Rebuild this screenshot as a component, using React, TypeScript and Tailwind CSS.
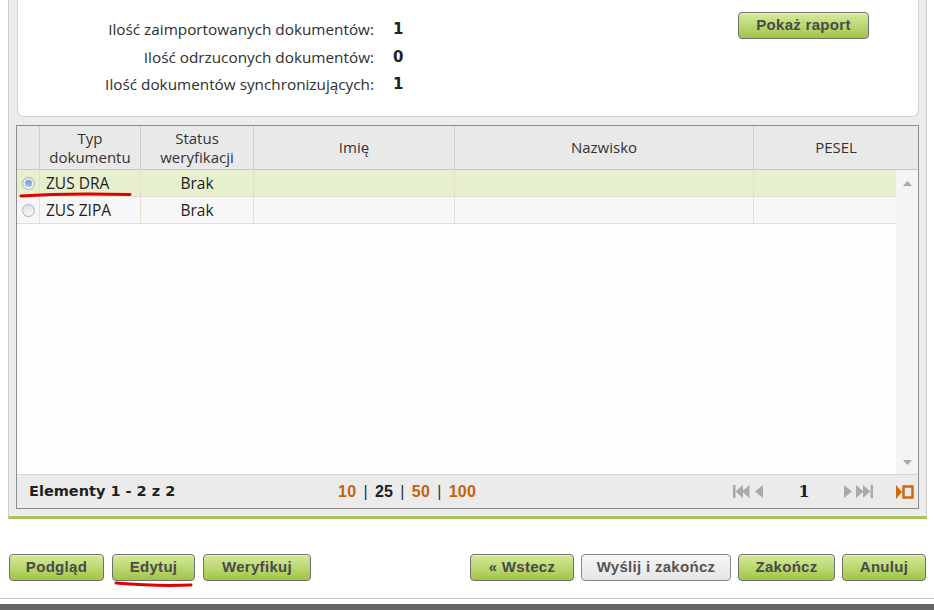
import React from "react";

const greenBtn =
  "h-[27px] rounded-[4px] border border-[#6f6f6f] bg-gradient-to-b from-[#d6ea9c] via-[#bcd871] to-[#9fc545] text-[15px] tracking-[0.3px] font-bold text-[#4a4a4a] font-['Liberation_Sans',Arial,sans-serif] flex items-center justify-center shadow-[inset_0_1px_0_rgba(255,255,255,0.5)]";

function Radio({ selected }: { selected?: boolean }) {
  return (
    <div className="w-[13px] h-[13px] rounded-full border border-[#adb2ba] bg-gradient-to-b from-[#dfe2e7] to-[#f8f8f8] flex items-center justify-center">
      {selected && <div className="w-[7px] h-[7px] rounded-full bg-gradient-to-b from-[#6f9ccc] to-[#a9c6e4]" />}
    </div>
  );
}

function Row({ typ, selected }: { typ: string; selected?: boolean }) {
  return (
    <div
      className={`grid grid-cols-[23px_101px_113px_201px_299px_1fr] h-[27px] border-b border-[#e6dfcf] text-[15.5px] text-[#1e1e1e] ${
        selected ? "bg-[#e6f0cf]" : "bg-[#f7f7f7]"
      }`}
    >
      <div className="flex items-center justify-center border-r border-[#e6dfcf]">
        <Radio selected={selected} />
      </div>
      <div className="flex items-center pl-[6px] pt-px border-r border-[#e6dfcf]">{typ}</div>
      <div className="flex items-center justify-center pt-px border-r border-[#e6dfcf]">Brak</div>
      <div className="border-r border-[#e6dfcf]" />
      <div className="border-r border-[#e6dfcf]" />
      <div />
    </div>
  );
}

export default function App() {
  return (
    <div className="relative w-[934px] h-[610px] overflow-hidden bg-white font-['Open_Sans','Noto_Sans',sans-serif] text-[#2b2b2b]">
      <div className="ml-[8px] w-[919px] border-x border-[#cdcdcd] border-b-[3px] border-b-[#a8c55a] bg-[#ececec] px-[7px] pb-[7px]">
        {/* top panel */}
        <div className="ml-px w-[902px] h-[117px] bg-white border border-t-0 border-[#d4d4d4] rounded-b-[7px] flex items-start">
          <div className="grid grid-cols-[356px_auto] content-start gap-x-[19px] pt-[16px] text-[15.3px] leading-[27.5px] text-[#2e2e2e]">
            <div className="text-right">Ilość zaimportowanych dokumentów:</div>
            <div className="font-bold font-['DejaVu_Sans',sans-serif] text-[#222] text-[15px]">1</div>
            <div className="text-right">Ilość odrzuconych dokumentów:</div>
            <div className="font-bold font-['DejaVu_Sans',sans-serif] text-[#222] text-[15px]">0</div>
            <div className="text-right">Ilość dokumentów synchronizujących:</div>
            <div className="font-bold font-['DejaVu_Sans',sans-serif] text-[#222] text-[15px]">1</div>
          </div>
          <div className="ml-auto mr-[49px] mt-[12px]">
            <button className={`${greenBtn} w-[131px]`}>Pokaż raport</button>
          </div>
        </div>

        {/* table */}
        <div className="mt-[8px] w-[903px] h-[384px] border border-[#8c8c8c] flex flex-col">
          <div className="grid grid-cols-[23px_101px_113px_201px_299px_1fr] h-[44px] bg-[#e9e9e9] border-b border-[#c9c9c9] text-[15px] leading-[19px] text-[#333]">
            <div className="border-r border-[#cfcfcf]" />
            <div className="border-r border-[#cfcfcf] flex flex-col items-center justify-center text-center">
              <span>Typ</span>
              <span>dokumentu</span>
            </div>
            <div className="border-r border-[#cfcfcf] flex flex-col items-center justify-center text-center">
              <span>Status</span>
              <span>weryfikacji</span>
            </div>
            <div className="border-r border-[#cfcfcf] flex items-center justify-center">Imię</div>
            <div className="border-r border-[#cfcfcf] flex items-center justify-center">Nazwisko</div>
            <div className="flex items-center justify-center">PESEL</div>
          </div>
          <div className="flex-1 flex bg-[#fdfdfd]">
            <div className="w-[879px]">
              <Row typ="ZUS DRA" selected />
              <Row typ="ZUS ZIPA" />
            </div>
            <div className="flex-1 bg-[#f4f4f4] flex flex-col items-center justify-between pt-[11px] pb-[9px]">
              <svg width="9" height="5" viewBox="0 0 9 5">
                <polygon points="0,5 4.5,0 9,5" fill="#a8a8a8" />
              </svg>
              <svg width="9" height="5" viewBox="0 0 9 5">
                <polygon points="0,0 9,0 4.5,5" fill="#a8a8a8" />
              </svg>
            </div>
          </div>
          <div className="h-[34px] bg-[#ebebeb] border-t border-[#d6d6d6] flex items-center font-bold">
            <div className="w-[321px] pl-[12px] text-[#1f1f1f] font-['DejaVu_Sans',sans-serif] text-[14.5px]">Elementy 1 - 2 z 2</div>
            <div className="flex items-center text-[16px] font-['Liberation_Sans',Arial,sans-serif] tracking-[0.3px]">
              <span className="text-[#c5620d]">10</span>
              <span className="mx-[7px] text-[#333] font-normal">|</span>
              <span className="text-[#1f1f1f]">25</span>
              <span className="mx-[7px] text-[#333] font-normal">|</span>
              <span className="text-[#c5620d]">50</span>
              <span className="mx-[7px] text-[#333] font-normal">|</span>
              <span className="text-[#c5620d]">100</span>
            </div>
            <div className="ml-auto mr-[4px] flex items-center">
              <svg width="20" height="13" viewBox="0 0 20 13">
                <rect x="0" y="0" width="2.5" height="13" fill="#a9a9a9" />
                <polygon points="2.5,6.5 10,0 10,13" fill="#a9a9a9" />
                <polygon points="9,6.5 16.5,0 16.5,13" fill="#a9a9a9" />
              </svg>
              <svg className="ml-[2px]" width="10" height="13" viewBox="0 0 10 13">
                <polygon points="0,6.5 8,0 8,13" fill="#a9a9a9" />
              </svg>
              <span className="w-[78px] text-center font-['DejaVu_Serif',serif] text-[16px] text-[#1a1a2e]">1</span>
              <svg width="10" height="13" viewBox="0 0 10 13">
                <polygon points="1,0 9,6.5 1,13" fill="#a9a9a9" />
              </svg>
              <svg className="ml-[2px]" width="20" height="13" viewBox="0 0 20 13">
                <polygon points="1,0 8.5,6.5 1,13" fill="#a9a9a9" />
                <polygon points="8,0 15.5,6.5 8,13" fill="#a9a9a9" />
                <rect x="15.5" y="0" width="2.5" height="13" fill="#a9a9a9" />
              </svg>
              <svg className="ml-[21px]" width="18" height="14" viewBox="0 0 18 14">
                <polygon points="0,0 6,7 0,14" fill="#cf6a12" />
                <rect x="7.5" y="1.5" width="9" height="11" fill="none" stroke="#cf6a12" strokeWidth="2.5" />
              </svg>
            </div>
          </div>
        </div>
      </div>

      {/* bottom buttons */}
      <div className="mt-[35px] flex pl-[9px] pr-[8px]">
        <button className={`${greenBtn} w-[95px]`}>Podgląd</button>
        <button className={`${greenBtn} w-[83px] ml-[8px]`}>Edytuj</button>
        <button className={`${greenBtn} w-[108px] ml-[8px]`}>Weryfikuj</button>
        <button className={`${greenBtn} w-[104px] ml-auto`}>« Wstecz</button>
        <button className="h-[27px] w-[150px] ml-[7px] rounded-[4px] border border-[#8a8a8a] bg-gradient-to-b from-[#f6f6f6] to-[#e6e6e6] text-[15px] tracking-[0.3px] font-bold text-[#555] font-['Liberation_Sans',Arial,sans-serif] flex items-center justify-center">
          Wyślij i zakończ
        </button>
        <button className={`${greenBtn} w-[97px] ml-[7px]`}>Zakończ</button>
        <button className={`${greenBtn} w-[84px] ml-[7px]`}>Anuluj</button>
      </div>
      <div className="mt-[17px] h-px bg-[#c2c2c2]" />
      <div className="mt-[5px] h-[10px] bg-[#666]" />

      {/* red annotations */}
      <svg className="absolute left-[19px] top-[191px]" width="114" height="8" viewBox="0 0 114 8">
        <path d="M2 5 C 30 3, 70 2.5, 111 3.5" stroke="#e00000" strokeWidth="3" fill="none" strokeLinecap="round" />
      </svg>
      <svg className="absolute left-[114px] top-[580px]" width="80" height="8" viewBox="0 0 80 8">
        <path d="M2 3 C 25 5, 55 6, 77 5" stroke="#e00000" strokeWidth="3" fill="none" strokeLinecap="round" />
      </svg>
    </div>
  );
}
